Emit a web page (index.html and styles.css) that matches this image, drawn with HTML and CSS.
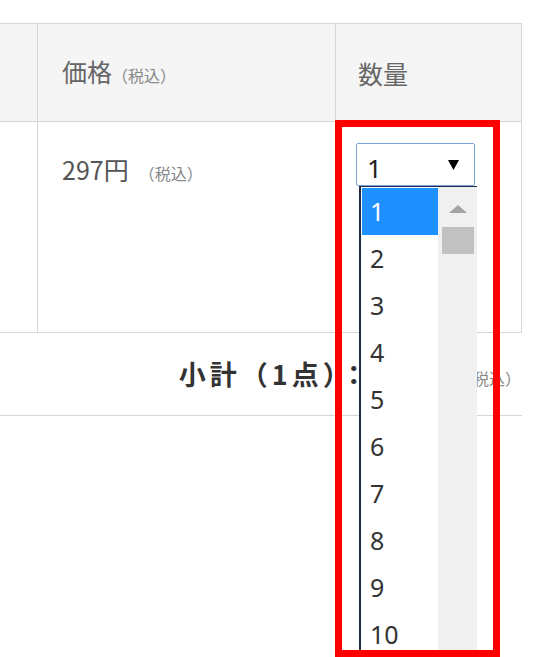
FILE: index.html
```html
<!DOCTYPE html>
<html lang="ja">
<head>
<meta charset="utf-8">
<link rel="stylesheet" href="styles.css">
</head>
<body>
<div class="page">
  <div class="cart">
    <div class="row head">
      <div class="cell c1"></div>
      <div class="cell c2"><span class="htext">価格<span class="tax">（税込）</span></span></div>
      <div class="cell c3"><span class="htext">数量</span></div>
    </div>
    <div class="row item">
      <div class="cell c1"></div>
      <div class="cell c2"><span class="price">297円</span><span class="tax">（税込）</span></div>
      <div class="cell c3">
        <div class="select">
          <span class="value">1</span>
          <svg class="arrow" width="11" height="10" viewBox="0 0 11 10"><path d="M0 0H11L5.5 10Z" fill="#000"/></svg>
          <div class="options">
            <ul class="list">
              <li class="sel">1</li>
              <li>2</li>
              <li>3</li>
              <li>4</li>
              <li>5</li>
              <li>6</li>
              <li>7</li>
              <li>8</li>
              <li>9</li>
              <li>10</li>
            </ul>
            <div class="scrollbar">
              <svg class="up" width="18" height="8" viewBox="0 0 18 8"><path d="M0 8H18L9 0Z" fill="#a3a3a3"/></svg>
              <div class="thumb"></div>
            </div>
          </div>
        </div>
      </div>
    </div>
  </div>
  <div class="subtotal">
    <span class="label">小計（1点）：</span>
    <span class="amount">297円</span>
    <span class="tax">（税込）</span>
  </div>
  <div class="mark"></div>
</div>
</body>
</html>
```

FILE: styles.css
```css
* { box-sizing: border-box; }
html, body { margin: 0; padding: 0; background: #fff; }
body {
  font-family: "Noto Sans CJK JP", "Noto Sans", sans-serif;
  color: #555;
  width: 558px;
  height: 657px;
  overflow: hidden;
}
.page { position: relative; padding-top: 23px; height: 657px; }
.cart {
  width: 522px;
  border-top: 1px solid #d6d6d6;
  border-right: 1px solid #d6d6d6;
}
.row { display: flex; border-bottom: 1px solid #d6d6d6; }
.head { height: 98px; background: #f5f5f5; }
.head .cell { display: flex; align-items: center; }
.htext { font-size: 25px; color: #666; line-height: 30px; }
.item { height: 211px; }
.cell { height: 100%; }
.c1 { width: 38px; border-right: 1px solid #d6d6d6; }
.c2 { width: 298px; border-right: 1px solid #d6d6d6; padding-left: 24px; }
.c3 { flex: 1; padding-left: 20px; }
.head .c3 { padding-left: 22px; }
.tax { font-size: 16px; color: #888; }
.item .c2 { padding-top: 32px; display: flex; align-items: baseline; line-height: 30px; }
.price { font-size: 25px; color: #555; margin-right: 10px; }
.item .c3 { padding-top: 21px; }
.select {
  position: relative;
  width: 119px;
  height: 43px;
  border: 1px solid #7ba3d6;
  border-radius: 2px;
  display: flex;
  justify-content: space-between;
  padding: 9px 15px 0 10px;
  background: #fff;
}
.value { font-family: "Noto Sans", sans-serif; font-size: 26px; line-height: 30px; color: #222; }
.arrow { margin-top: 7px; }
.options {
  position: absolute;
  top: 42px;
  left: 2px;
  width: 118px;
  height: 465px;
  background: #fff;
  border-top: 1px solid #1f2a44;
  border-left: 2px solid #1f2a44;
  display: flex;
  overflow: hidden;
  z-index: 2;
}
.list {
  list-style: none;
  margin: 0;
  padding: 1px 0 0 1px;
  width: 77px;
}
.list li {
  height: 47px;
  line-height: 47px;
  padding-left: 8px;
  font-family: "Noto Sans", sans-serif;
  font-size: 25px;
  color: #333;
}
.list li.sel { background: #1e90ff; color: #fff; }
.scrollbar {
  flex: 1;
  background: #f0f0f0;
  display: flex;
  flex-direction: column;
  align-items: center;
  padding-top: 18px;
}
.thumb { width: 32px; height: 27px; background: #c1c1c1; margin-top: 14px; }
.subtotal {
  width: 522px;
  height: 83px;
  border-bottom: 1px solid #d6d6d6;
  display: flex;
  justify-content: flex-end;
  align-items: baseline;
  padding: 21px 1px 0 0;
}
.label { font-size: 27px; font-weight: bold; color: #333; letter-spacing: 4px; }
.amount { font-size: 27px; font-weight: bold; color: #333; margin: 0 8px 0 3px; }
.mark {
  position: absolute;
  left: 335px;
  top: 120px;
  width: 165px;
  height: 537px;
  border: 7px solid #ff0000;
  z-index: 5;
}
```
